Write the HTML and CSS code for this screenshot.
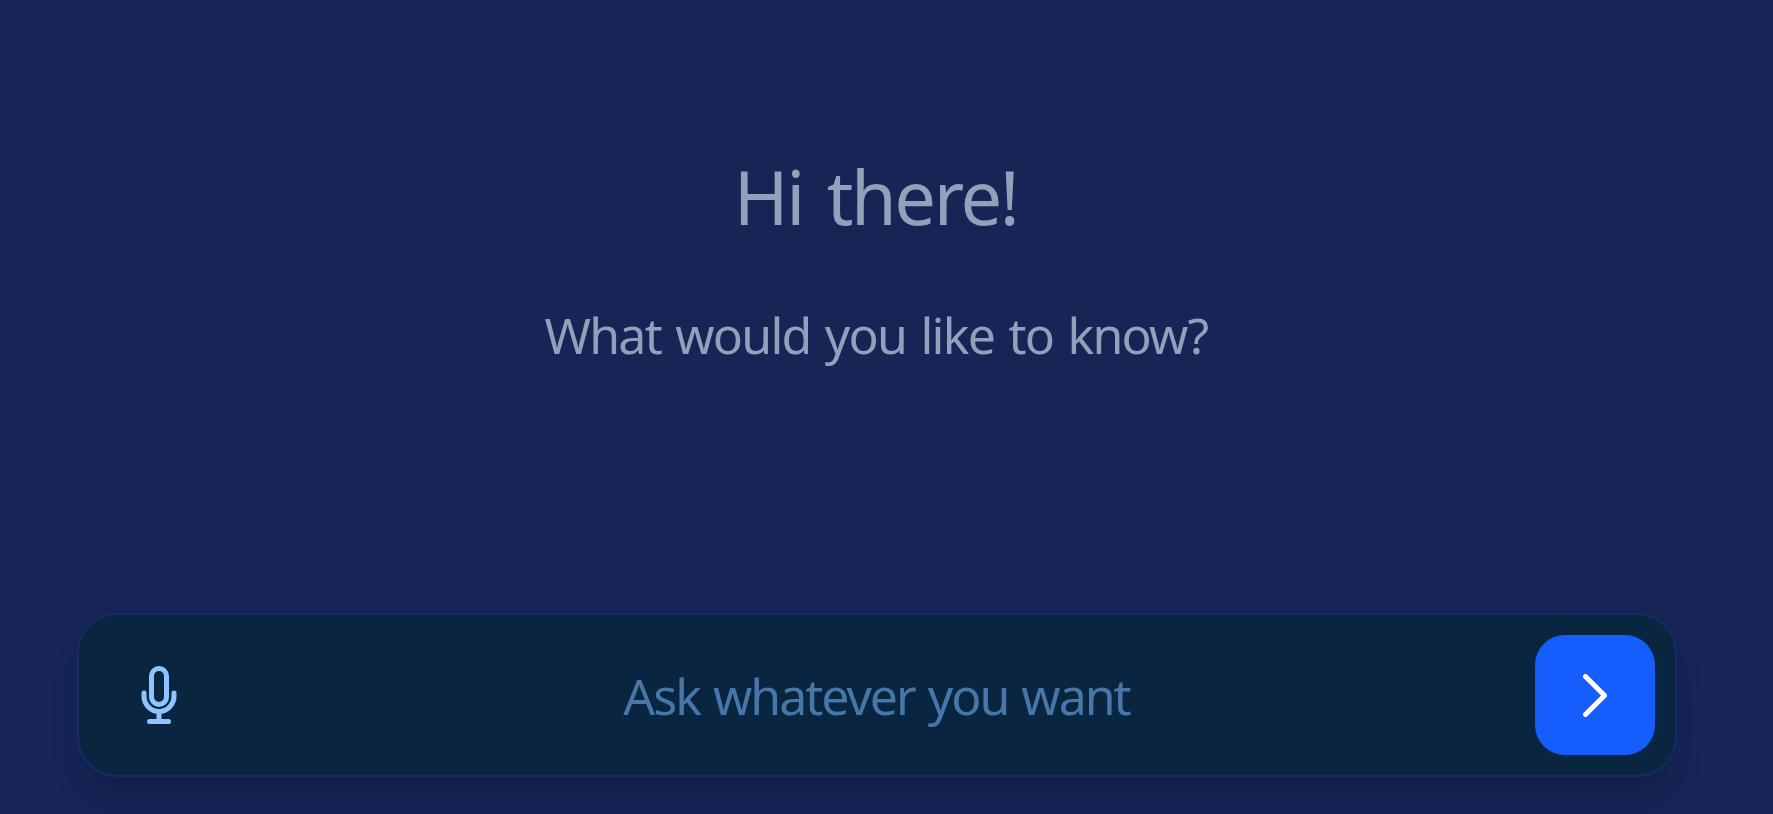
FILE: index.html
```
<!DOCTYPE html>
<html lang="en">
<head>
    <meta charset="UTF-8">
    <meta name="viewport" content="width=device-width, initial-scale=1.0">
    <title>Assistant</title>
    <link rel="stylesheet" href="styles.css">
</head>
<body>

<main class="chat">
    <h1 class="title">Hi there!</h1>
    <p class="subtitle">What would you like to know?</p>
    <form class="ask-bar">
        <button type="button" class="mic" aria-label="Speak">
            <svg viewBox="0 0 36 58" fill="none" stroke="currentColor" stroke-width="5" stroke-linecap="round" stroke-linejoin="round">
                <rect x="10.5" y="2.5" width="15" height="36" rx="7.5"/>
                <path d="M3 27v3a15 15.5 0 0 0 30 0v-3M18 45.5v10M8.5 55.5h19"/>
            </svg>
        </button>
        <input type="text" class="question" placeholder="Ask whatever you want">
        <button type="button" class="send" aria-label="Send">
            <svg viewBox="0 0 24 43" fill="none" stroke="currentColor" stroke-width="5" stroke-linecap="round" stroke-linejoin="round">
                <path d="m2.5 2.5 19 19-19 19"/>
            </svg>
        </button>
    </form>
</main>

</body>
</html>
```
FILE: styles.css
```
body {
    margin: 0;
    height: 814px;
    overflow: hidden;
    background-color: #162456;
    font-family: "Segoe UI", "Noto Sans", sans-serif;
}
.chat {
    width: 1600px;
    margin-left: 77px;
    padding-top: 148px;
    text-align: center;
    color: #90a1b9;
}
.title {
    margin: 0;
    padding-right: 3px;
    font-size: 74px;
    font-weight: 400;
    line-height: 98px;
    letter-spacing: -2.4px;
    word-spacing: 7px;
}
.subtitle {
    margin: 49px 0 0;
    padding-right: 2px;
    font-size: 50px;
    font-weight: 400;
    line-height: 80px;
    letter-spacing: -1.75px;
    word-spacing: 3px;
}
.ask-bar {
    display: flex;
    align-items: center;
    box-sizing: border-box;
    height: 164px;
    margin-top: 238px;
    padding: 0 20px;
    background-color: #0a253f;
    border: 2px solid #132d67;
    border-radius: 40px;
    box-shadow: 0 25px 37px -7px rgba(0, 0, 0, 0.1), 0 10px 15px -10px rgba(0, 0, 0, 0.05);
}
.ask-bar button {
    display: flex;
    align-items: center;
    justify-content: center;
    width: 120px;
    height: 120px;
    padding: 0;
    border: none;
    cursor: pointer;
}
.ask-bar .mic {
    background: none;
    color: #8ec5ff;
}
.mic svg {
    width: 36px;
    height: 58px;
}
.question {
    flex: 1;
    min-width: 0;
    padding: 1px 1px 0 0;
    border: none;
    outline: none;
    background: none;
    color: #90a1b9;
    font-family: inherit;
    font-size: 50px;
    letter-spacing: -2px;
    word-spacing: 2px;
    text-align: center;
}
.question::placeholder {
    color: #4776a8;
}
.ask-bar .send {
    background-color: #155dfc;
    border-radius: 30px;
    color: #fff;
}
.send svg {
    width: 24px;
    height: 43px;
}
```
